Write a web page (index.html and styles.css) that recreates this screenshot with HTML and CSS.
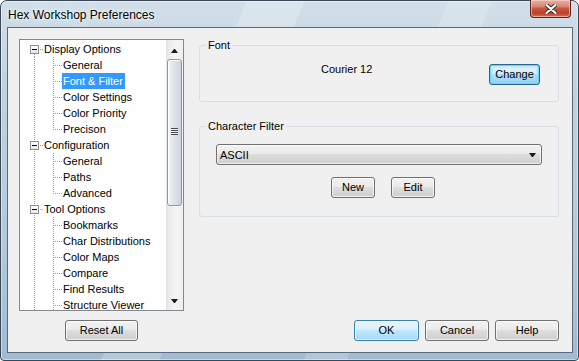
FILE: index.html
```html
<!DOCTYPE html>
<html lang="en">
<head>
<meta charset="utf-8">
<title>Hex Workshop Preferences</title>
<link rel="stylesheet" href="styles.css">
</head>
<body>
<div class="window">
  <div class="titlebar">
    <span class="title">Hex Workshop Preferences</span>
    <button class="close" aria-label="Close">
      <svg width="12" height="10" viewBox="0 0 12 10">
        <path d="M1.5 1 L10.5 9 M10.5 1 L1.5 9" stroke="#3b2a26" stroke-width="4" stroke-linecap="round"/>
        <path d="M1.5 1 L10.5 9 M10.5 1 L1.5 9" stroke="#ffffff" stroke-width="2.2" stroke-linecap="round"/>
      </svg>
    </button>
  </div>
  <div class="client">
    <div class="tree">
      <ul class="tree-list">
        <li class="row"><span class="ind root-first"><span class="expander"></span></span><span class="label">Display Options</span></li>
        <li class="row"><span class="ind pass"></span><span class="ind tee"></span><span class="label">General</span></li>
        <li class="row"><span class="ind pass"></span><span class="ind tee"></span><span class="label selected">Font &amp; Filter</span></li>
        <li class="row"><span class="ind pass"></span><span class="ind tee"></span><span class="label">Color Settings</span></li>
        <li class="row"><span class="ind pass"></span><span class="ind tee"></span><span class="label">Color Priority</span></li>
        <li class="row"><span class="ind pass"></span><span class="ind elbow"></span><span class="label">Precison</span></li>
        <li class="row"><span class="ind root-mid"><span class="expander"></span></span><span class="label">Configuration</span></li>
        <li class="row"><span class="ind pass"></span><span class="ind tee"></span><span class="label">General</span></li>
        <li class="row"><span class="ind pass"></span><span class="ind tee"></span><span class="label">Paths</span></li>
        <li class="row"><span class="ind pass"></span><span class="ind elbow"></span><span class="label">Advanced</span></li>
        <li class="row"><span class="ind root-mid"><span class="expander"></span></span><span class="label">Tool Options</span></li>
        <li class="row"><span class="ind pass"></span><span class="ind tee"></span><span class="label">Bookmarks</span></li>
        <li class="row"><span class="ind pass"></span><span class="ind tee"></span><span class="label">Char Distributions</span></li>
        <li class="row"><span class="ind pass"></span><span class="ind tee"></span><span class="label">Color Maps</span></li>
        <li class="row"><span class="ind pass"></span><span class="ind tee"></span><span class="label">Compare</span></li>
        <li class="row"><span class="ind pass"></span><span class="ind tee"></span><span class="label">Find Results</span></li>
        <li class="row"><span class="ind pass"></span><span class="ind tee"></span><span class="label">Structure Viewer</span></li>
      </ul>
      <div class="vscroll">
        <div class="arrow arrow-up"><span class="tri-up"></span></div>
        <div class="track"><div class="thumb"><span class="grip"></span></div></div>
        <div class="arrow arrow-down"><span class="tri-down"></span></div>
      </div>
    </div>

    <div class="panes">
      <fieldset class="group font-group">
        <legend>Font</legend>
        <div class="font-row">
          <span class="font-name">Courier 12</span>
          <button class="btn btn-focus btn-change">Change</button>
        </div>
      </fieldset>
      <fieldset class="group filter-group">
        <legend>Character Filter</legend>
        <div class="combo"><span class="combo-text">ASCII</span><span class="tri-down"></span></div>
        <div class="filter-actions">
          <button class="btn btn-small">New</button>
          <button class="btn btn-small">Edit</button>
        </div>
      </fieldset>
    </div>

    <div class="left-actions">
      <button class="btn btn-reset">Reset All</button>
    </div>
    <div class="dialog-actions">
      <button class="btn btn-default btn-ok">OK</button>
      <button class="btn btn-std">Cancel</button>
      <button class="btn btn-std">Help</button>
    </div>
  </div>
</div>
</body>
</html>
```

FILE: styles.css
```css
* { box-sizing: border-box; }

html, body {
  margin: 0;
  padding: 0;
  background: #ffffff;
}

body {
  font-family: "Liberation Sans", Arial, sans-serif;
  font-size: 11px;
  color: #000;
}

.window {
  width: 579px;
  height: 361px;
  border: 1px solid #3a4757;
  border-radius: 7px 7px 4px 4px;
  padding: 0 5px 7px 6px;
  display: flex;
  flex-direction: column;
  box-shadow: inset 0 0 0 1px rgba(255, 255, 255, 0.45);
  background:
    linear-gradient(112deg, transparent 0 34%, rgba(255,255,255,0.22) 34% 42%, transparent 42% 62%, rgba(255,255,255,0.18) 62% 68%, transparent 68% 100%),
    linear-gradient(#d2dfe9 0%, #c0d2e1 25%, #b1c8da 70%, #9fbbd2 100%);
}

.titlebar {
  height: 26px;
  flex: none;
  display: flex;
  align-items: flex-start;
}

.title {
  align-self: center;
  font-size: 12px;
  padding-left: 1px;
  margin-top: 1px;
  color: #000;
  text-shadow: 0 0 6px rgba(255, 255, 255, 0.9), 0 0 3px rgba(255, 255, 255, 0.9);
}

.close {
  margin: -1px 2px 0 auto;
  width: 41px;
  height: 18px;
  padding: 0;
  border: 1px solid #5a2219;
  border-top: none;
  border-radius: 0 0 4px 4px;
  display: flex;
  align-items: center;
  justify-content: center;
  background: linear-gradient(#e6b1a4 0%, #d98a78 35%, #c9533d 52%, #c0412b 78%, #d6705a 100%);
  box-shadow: inset 0 0 0 1px rgba(255, 220, 210, 0.55);
}

.close svg { display: block; margin-top: 0; }

.client {
  flex: 1;
  border: 1px solid #5b6a7a;
  background: #f0f0f0;
  padding: 11px 13px 11px 11px;
  display: grid;
  grid-template-columns: 165px 360px;
  grid-template-rows: 272px 21px;
  column-gap: 15px;
  row-gap: 9px;
}

/* ---- Tree view ---- */
.tree {
  border: 1px solid #828790;
  background: #fff;
  display: flex;
  overflow: hidden;
}

.tree-list {
  flex: 1;
  list-style: none;
  margin: 0;
  padding: 1px 0 0 5px;
  overflow: hidden;
}

.row {
  display: flex;
  height: 16px;
  line-height: 16px;
  white-space: nowrap;
}

.ind {
  flex: none;
  display: block;
  width: 19px;
  height: 16px;
  background-repeat: no-repeat;
}

.pass {
  background-image: repeating-linear-gradient(to bottom, #a0a0a0 0 1px, transparent 1px 2px);
  background-size: 1px 16px;
  background-position: 9px 0;
}

.tee {
  background-image:
    repeating-linear-gradient(to bottom, #a0a0a0 0 1px, transparent 1px 2px),
    repeating-linear-gradient(to right, #a0a0a0 0 1px, transparent 1px 2px);
  background-size: 1px 16px, 9px 1px;
  background-position: 9px 0, 11px 8px;
}

.elbow {
  background-image:
    repeating-linear-gradient(to bottom, #a0a0a0 0 1px, transparent 1px 2px),
    repeating-linear-gradient(to right, #a0a0a0 0 1px, transparent 1px 2px);
  background-size: 1px 9px, 9px 1px;
  background-position: 9px 0, 11px 8px;
}

.root-first {
  background-image:
    repeating-linear-gradient(to bottom, #a0a0a0 0 1px, transparent 1px 2px),
    repeating-linear-gradient(to right, #a0a0a0 0 1px, transparent 1px 2px);
  background-size: 1px 4px, 5px 1px;
  background-position: 9px 13px, 15px 8px;
}

.root-mid {
  background-image:
    repeating-linear-gradient(to bottom, #a0a0a0 0 1px, transparent 1px 2px),
    repeating-linear-gradient(to right, #a0a0a0 0 1px, transparent 1px 2px);
  background-size: 1px 16px, 5px 1px;
  background-position: 9px 0, 15px 8px;
}

.expander {
  display: block;
  width: 9px;
  height: 9px;
  margin: 4px 0 0 5px;
  border: 1px solid #919191;
  background:
    linear-gradient(#000, #000) no-repeat 1px 3px / 5px 1px,
    linear-gradient(#ffffff, #e6e6e6);
}

.label {
  margin-left: -1px;
  padding: 0 2px 0 1px;
  height: 16px;
}

.label.selected {
  background: #3399ff;
  color: #fff;
}

/* ---- Scrollbar ---- */
.vscroll {
  flex: none;
  width: 17px;
  display: flex;
  flex-direction: column;
  background: linear-gradient(to right, #e2e2e2 0%, #ececec 20%, #f5f5f5 55%, #eeeeee 100%);
}

.arrow {
  flex: none;
  height: 17px;
  display: flex;
  justify-content: center;
}

.arrow-up { align-items: flex-start; padding-top: 9px; }
.arrow-down { align-items: flex-start; padding-top: 6px; }

.tri-up {
  width: 1px;
  height: 0;
  border-left: 3px solid transparent;
  border-right: 3px solid transparent;
  border-bottom: 4px solid #1a1a1a;
  box-sizing: content-box;
}

.tri-down {
  width: 1px;
  height: 0;
  border-left: 3px solid transparent;
  border-right: 3px solid transparent;
  border-top: 4px solid #1a1a1a;
  box-sizing: content-box;
}

.track {
  flex: 1;
  padding: 2px 1px 0 1px;
}

.thumb {
  height: 147px;
  border: 1px solid #979797;
  border-radius: 3px;
  background: linear-gradient(to right, #f4f5f7 0%, #e3e7ee 35%, #d6dce6 70%, #ccd3de 100%);
  box-shadow: inset 1px 1px 0 #ffffff;
  display: flex;
  align-items: center;
  justify-content: center;
}

.grip {
  display: block;
  width: 7px;
  height: 7px;
  margin-top: -2px;
  background: repeating-linear-gradient(to bottom, #4a4a4a 0 1px, #eef1f5 1px 2px);
}

/* ---- Right panes ---- */
.panes {
  display: flex;
  flex-direction: column;
  gap: 18px;
}

.group {
  margin: 0;
  padding: 0;
  min-width: 0;
  border: 1px solid #d5dfe5;
  border-radius: 3px;
}

.group legend {
  margin-left: 6px;
  padding: 0 2px;
  line-height: 13px;
  font-size: 11px;
}

.font-group { height: 63px; }
.filter-group { height: 97px; }

.font-row {
  display: flex;
  align-items: flex-start;
  padding: 11px 18px 0 121px;
}

.font-name { line-height: 13px; }

.btn-change {
  margin-left: auto;
  margin-top: 1px;
  width: 51px;
}

.combo {
  margin: 11px 16px 0 16px;
  height: 21px;
  border: 1px solid #707070;
  border-radius: 3px;
  background: linear-gradient(#f2f2f2 0%, #ebebeb 45%, #dddddd 50%, #cfcfcf 100%);
  box-shadow: inset 0 0 0 1px rgba(255, 255, 255, 0.65);
  display: flex;
  align-items: center;
  padding: 0 5px 0 3px;
}

.combo-text { flex: 1; }

.combo .tri-down { margin-top: 1px; }

.filter-actions {
  display: flex;
  justify-content: center;
  gap: 16px;
  margin-top: 12px;
  padding-left: 8px;
}

.btn-small { width: 44px; }

/* ---- Buttons ---- */
.btn {
  font: inherit;
  color: #000;
  height: 21px;
  padding: 0;
  border: 1px solid #707070;
  border-radius: 3px;
  background: linear-gradient(#f2f2f2 0%, #ebebeb 45%, #dddddd 50%, #cfcfcf 100%);
  box-shadow: inset 0 0 0 1px rgba(255, 255, 255, 0.7);
  line-height: 17px;
}

.btn-default {
  border-color: #3c7fb1;
  background: linear-gradient(#eaf6fd 0%, #d9f0fc 45%, #bee6fd 50%, #a7d9f5 100%);
  box-shadow: inset 0 0 0 1px rgba(255, 255, 255, 0.6);
}

.btn-focus {
  border-color: #2c628b;
  background: linear-gradient(#e5f4fc 0%, #d4eefb 45%, #b2e0f7 50%, #93d1f0 100%);
  box-shadow: inset 0 0 0 1px #6ad6fb, inset 0 0 2px 2px rgba(120, 220, 255, 0.5);
}

.left-actions {
  display: flex;
  justify-content: center;
}

.btn-reset { width: 73px; }

.dialog-actions {
  display: flex;
  justify-content: flex-end;
  gap: 6px;
}

.btn-ok { width: 65px; }
.btn-std { width: 64px; }
```
